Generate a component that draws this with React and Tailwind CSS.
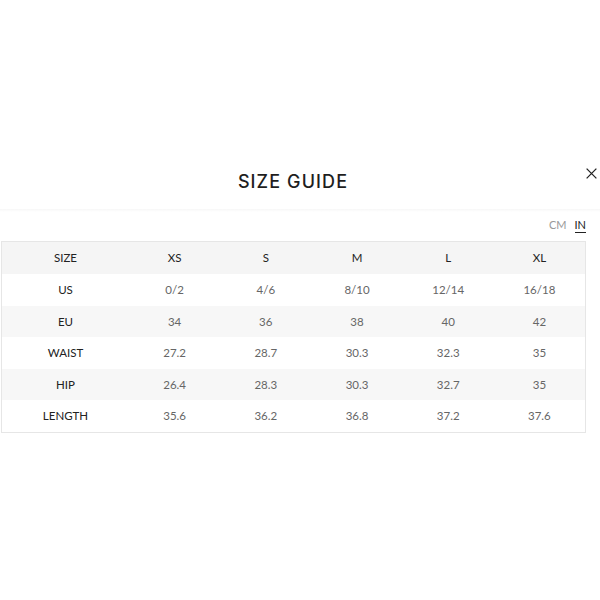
import React from 'react';

const sizes = ['XS', 'S', 'M', 'L', 'XL'];

const rows = [
  { label: 'US', values: ['0/2', '4/6', '8/10', '12/14', '16/18'] },
  { label: 'EU', values: ['34', '36', '38', '40', '42'] },
  { label: 'WAIST', values: ['27.2', '28.7', '30.3', '32.3', '35'] },
  { label: 'HIP', values: ['26.4', '28.3', '30.3', '32.7', '35'] },
  { label: 'LENGTH', values: ['35.6', '36.2', '36.8', '37.2', '37.6'] },
];

const App = () => {
  return (
    <div className="w-[600px] h-[600px] bg-white font-['Lato','Open_Sans',sans-serif] text-[#222]">
      <div className="pt-[170px]">
        <div className="relative h-[22px] flex items-center justify-center">
          <h1 className="ml-[-14px] text-[18px] tracking-[1.1px] font-['Inter',sans-serif] font-medium text-[#1e1e1e]">SIZE GUIDE</h1>
          <button className="absolute right-[0px] top-[-6px] w-[18px] h-[18px] flex items-center justify-center text-[#222]">
            <svg viewBox="0 0 16 16" className="w-[13px] h-[13px]" fill="none" stroke="currentColor" strokeWidth="1.6">
              <path d="M2 2 L14 14 M14 2 L2 14" />
            </svg>
          </button>
        </div>

        <div className="mt-[17px] h-[3px] bg-gradient-to-b from-[#f7f7f7] to-white" />

        <div className="flex justify-end gap-[8px] pr-[14px] pt-[6px] text-[11px] leading-[14px]">
          <span className="text-[#999]">CM</span>
          <span className="text-[#222] border-b border-[#222]">IN</span>
        </div>

        <div className="mt-[8px] ml-[1px] w-[585px] border border-[#e6e6e6] text-[11.5px]">
          <div className="grid grid-cols-[127px_repeat(5,1fr)] h-[32px] items-center bg-[#f5f5f5] text-[#222]">
            <div className="text-center">SIZE</div>
            {sizes.map((s) => (
              <div key={s} className="text-center">{s}</div>
            ))}
          </div>
          {rows.map((r, i) => (
            <div
              key={r.label}
              className={`grid grid-cols-[127px_repeat(5,1fr)] h-[31.5px] items-center ${i % 2 === 1 ? 'bg-[#f7f7f7]' : 'bg-white'}`}
            >
              <div className="text-center text-[#222]">{r.label}</div>
              {r.values.map((v, j) => (
                <div key={j} className="text-center text-[#666]">{v}</div>
              ))}
            </div>
          ))}
        </div>
      </div>
    </div>
  );
};

export default App;
